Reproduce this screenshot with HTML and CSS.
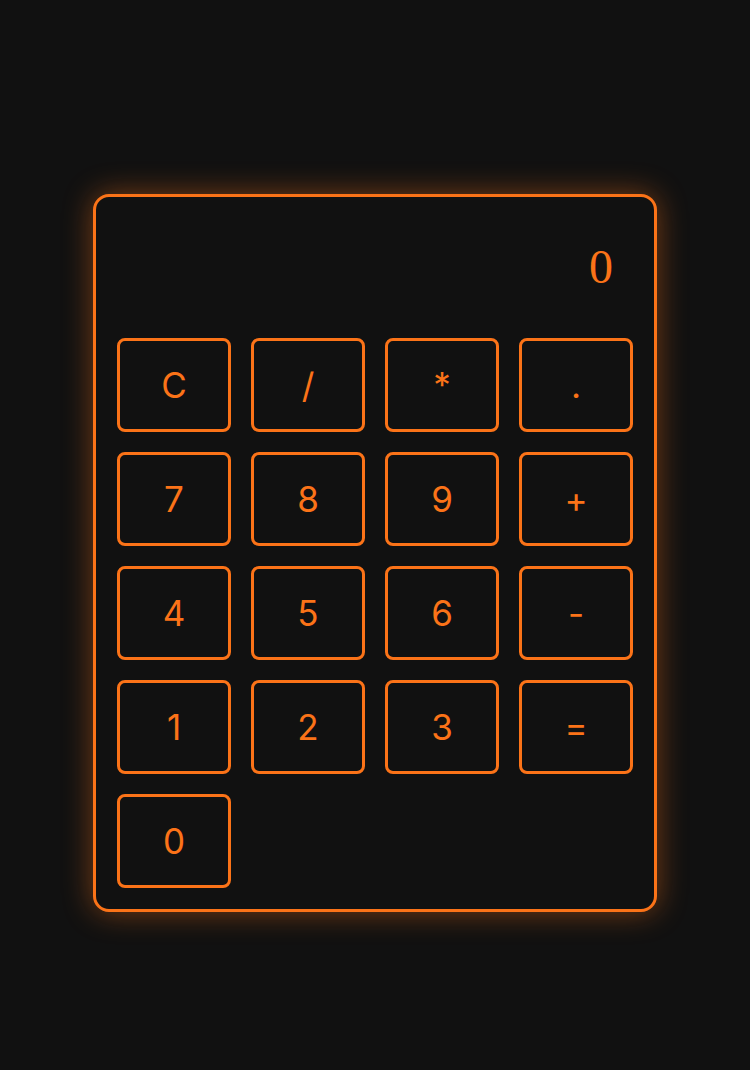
FILE: index.html
```html
<!DOCTYPE html>
<html>
<head>
<meta charset="utf-8">
<link rel="stylesheet" href="styles.css">
</head>
<body>
<div class="page">
  <div class="calc">
    <div class="display">0</div>
    <div class="keys">
      <button class="key">C</button>
      <button class="key">/</button>
      <button class="key">*</button>
      <button class="key">.</button>
      <button class="key">7</button>
      <button class="key">8</button>
      <button class="key">9</button>
      <button class="key">+</button>
      <button class="key">4</button>
      <button class="key">5</button>
      <button class="key">6</button>
      <button class="key">-</button>
      <button class="key">1</button>
      <button class="key">2</button>
      <button class="key">3</button>
      <button class="key">=</button>
      <button class="key">0</button>
    </div>
  </div>
</div>
</body>
</html>
```
FILE: styles.css
```css
html, body {
  margin: 0;
  padding: 0;
  background: #111111;
}
.page {
  width: 750px;
  height: 1070px;
  display: flex;
  justify-content: center;
  padding-top: 194px;
  box-sizing: border-box;
}
.calc {
  width: 564px;
  height: 718px;
  box-sizing: border-box;
  border: 3px solid #fb7318;
  border-radius: 16px;
  padding: 21px;
  background: #111111;
  box-shadow: 0 0 30px rgba(251, 115, 24, 0.45);
  display: flex;
  flex-direction: column;
}
.display {
  height: 100px;
  box-sizing: border-box;
  margin-bottom: 20px;
  display: flex;
  align-items: center;
  justify-content: flex-end;
  padding: 0 20px 4px 0;
  font-family: "Liberation Serif", serif;
  font-size: 48px;
  color: #fb7318;
}
.keys {
  display: grid;
  grid-template-columns: repeat(4, 114px);
  grid-auto-rows: 94px;
  gap: 20px;
}
.key {
  box-sizing: border-box;
  background: transparent;
  border: 3px solid #fb7318;
  border-radius: 8px;
  color: #fb7318;
  font-family: Inter, "Liberation Sans", sans-serif;
  font-size: 35px;
  font-weight: 400;
  padding: 0;
  display: flex;
  align-items: center;
  justify-content: center;
}
```
